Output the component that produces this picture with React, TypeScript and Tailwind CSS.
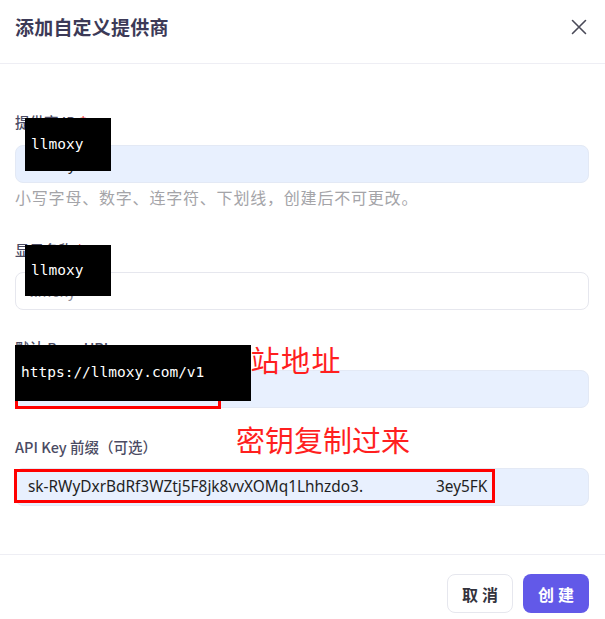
import React from "react";

const cjk = { fontFamily: '"Noto Sans CJK SC", "Noto Sans", sans-serif' };
const mono = { fontFamily: '"DejaVu Sans Mono", "Liberation Mono", monospace' };

function Label({ text, required }: { text: string; required?: boolean }) {
  return (
    <div className="h-[20px] text-[14.5px] leading-[20px] font-medium text-[#4b4b63]">
      {text}
      {required && <span className="text-[#ef4444]"> *</span>}
    </div>
  );
}

function CloseIcon() {
  return (
    <svg width="16" height="16" viewBox="0 0 16 16" fill="none">
      <path d="M1.5 1.5L14.5 14.5M14.5 1.5L1.5 14.5" stroke="#4a4a58" strokeWidth="1.6" strokeLinecap="round" />
    </svg>
  );
}

export default function App() {
  return (
    <div className="relative w-[605px] h-[619px] bg-white overflow-hidden" style={cjk}>
      {/* header */}
      <div className="flex items-center justify-between h-[64px] pl-[15px] pr-[18px] border-b border-[#eeeef4]">
        <h1 className="text-[19px] font-bold text-[#3c3a57] tracking-[0.2px] -mt-[8px]">添加自定义提供商</h1>
        <div className="-mt-[10px]">
          <CloseIcon />
        </div>
      </div>

      {/* form */}
      <div className="pl-[15px] pr-[16px] pt-[48px] pb-[48px] border-b border-[#eeeef4]">
        <div>
          <Label text="提供商 ID" required />
          <div className="mt-[13px] h-[38px] rounded-lg bg-[#e8f0fe] border border-[#e3e9f5] flex items-center px-[13px] text-[15px] text-[#222]">
            llmoxy
          </div>
          <div className="mt-[4px] h-[20px] text-[16px] leading-[20px] tracking-[0.8px] text-[#a4a4a8]">
            小写字母、数字、连字符、下划线，创建后不可更改。
          </div>
        </div>

        <div className="mt-[33px]">
          <Label text="显示名称" required />
          <div className="mt-[12px] h-[38px] rounded-lg bg-white border border-[#e6e7ee] flex items-center px-[13px] text-[15px] text-[#8a8a95]">
            llmoxy
          </div>
        </div>

        <div className="mt-[28px]">
          <Label text="默认 Base URL" />
          <div className="mt-[12px] h-[38px] rounded-lg bg-[#e8f0fe] border border-[#e3e9f5]" />
        </div>

        <div className="mt-[29px]">
          <Label text="API Key 前缀（可选）" />
          <div
            className="mt-[11px] h-[38px] rounded-lg bg-[#e8f0fe] border border-[#e3e9f5] flex items-center pl-[12px] text-[15.4px] text-[#1f1f24]"
            style={{ fontFamily: '"Noto Sans", sans-serif' }}
          >
            <span className="w-[408px]">sk-RWyDxrBdRf3WZtj5F8jk8vvXOMq1Lhhzdo3.</span>
            <span>3ey5FK</span>
          </div>
        </div>
      </div>

      {/* footer */}
      <div className="flex justify-end gap-[10px] pr-[16px] pt-[19px]">
        <button className="w-[66px] h-[39px] rounded-lg border border-[#e6e7ee] bg-white text-[16px] font-bold text-[#33333d] tracking-[4px] pl-[4px]">
          取消
        </button>
        <button className="w-[66px] h-[39px] rounded-lg bg-[#6259e8] text-[16px] font-bold text-white tracking-[4px] pl-[4px]">
          创建
        </button>
      </div>

      {/* annotations */}
      <div className="absolute left-[220px] top-[345px] text-[29px] leading-none text-[#ff1f1f] tracking-[1.5px]">
        网站地址
      </div>
      <div className="absolute left-[236px] top-[425px] text-[29px] leading-none text-[#ff1f1f]">
        密钥复制过来
      </div>
      <div className="absolute left-[15px] top-[368px] w-[206px] h-[41px] border-[3px] border-[#ff0000]" />
      <div className="absolute left-[14px] top-[469px] w-[481px] h-[34px] border-[3px] border-[#ff0000]" />

      <div className="absolute left-[25px] top-[118px] w-[86px] h-[53px] bg-black flex items-center pl-[6px] text-[14.5px] text-white" style={mono}>
        llmoxy
      </div>
      <div className="absolute left-[25px] top-[245px] w-[86px] h-[51px] bg-black flex items-center pl-[6px] text-[14.5px] text-white" style={mono}>
        llmoxy
      </div>
      <div className="absolute left-[15px] top-[345px] w-[236px] h-[56px] bg-black flex items-center pl-[6px] text-[14.5px] text-white" style={mono}>
        https://llmoxy.com/v1
      </div>
    </div>
  );
}
